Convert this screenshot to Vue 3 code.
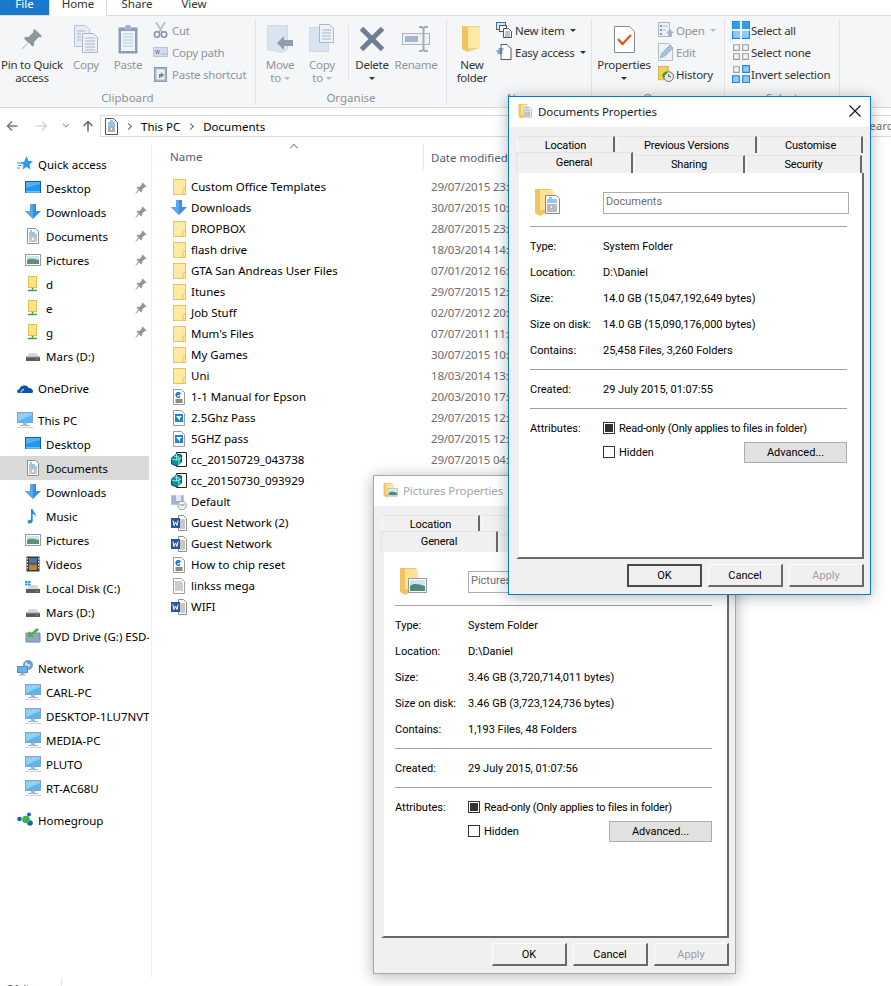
<script setup>
const quickAccess = [
  { icon: 'desktop', label: 'Desktop' },
  { icon: 'down', label: 'Downloads' },
  { icon: 'doc', label: 'Documents' },
  { icon: 'picture', label: 'Pictures' },
  { icon: 'share', label: 'd' },
  { icon: 'share', label: 'e' },
  { icon: 'share', label: 'g' }
]

const thisPc = [
  { icon: 'desktop', label: 'Desktop' },
  { icon: 'doc', label: 'Documents', selected: true },
  { icon: 'down', label: 'Downloads' },
  { icon: 'music', label: 'Music' },
  { icon: 'picture', label: 'Pictures' },
  { icon: 'film', label: 'Videos' },
  { icon: 'sysdisk', label: 'Local Disk (C:)' },
  { icon: 'drive', label: 'Mars (D:)' },
  { icon: 'dvd', label: 'DVD Drive (G:) ESD-' }
]

const network = ['CARL-PC', 'DESKTOP-1LU7NVT', 'MEDIA-PC', 'PLUTO', 'RT-AC68U']

const files = [
  { icon: 'folder', name: 'Custom Office Templates', date: '29/07/2015 23:45' },
  { icon: 'down', name: 'Downloads', date: '30/07/2015 10:02' },
  { icon: 'folder', name: 'DROPBOX', date: '28/07/2015 23:58' },
  { icon: 'folder', name: 'flash drive', date: '18/03/2014 14:10' },
  { icon: 'folder', name: 'GTA San Andreas User Files', date: '07/01/2012 16:21' },
  { icon: 'folder', name: 'Itunes', date: '29/07/2015 12:30' },
  { icon: 'folder', name: 'Job Stuff', date: '02/07/2012 20:14' },
  { icon: 'folder', name: "Mum's Files", date: '07/07/2011 11:05' },
  { icon: 'folder', name: 'My Games', date: '30/07/2015 10:09' },
  { icon: 'folder', name: 'Uni', date: '18/03/2014 13:40' },
  { icon: 'pdf', name: '1-1 Manual for Epson', date: '20/03/2010 17:12' },
  { icon: 'pass', name: '2.5Ghz Pass', date: '29/07/2015 12:31' },
  { icon: 'pass', name: '5GHZ pass', date: '29/07/2015 12:31' },
  { icon: 'cube', name: 'cc_20150729_043738', date: '29/07/2015 04:37' },
  { icon: 'cube', name: 'cc_20150730_093929' },
  { icon: 'rdp', name: 'Default' },
  { icon: 'word', name: 'Guest Network (2)' },
  { icon: 'word', name: 'Guest Network' },
  { icon: 'pdf', name: 'How to chip reset' },
  { icon: 'txt', name: 'linkss mega' },
  { icon: 'word', name: 'WIFI' }
]

const windows = [
  {
    id: 'pictures',
    title: 'Pictures Properties',
    name: 'Pictures',
    icon: 'foldpic',
    left: 373,
    top: 475,
    active: false,
    rows: [
      ['Type:', 'System Folder'],
      ['Location:', 'D:\\Daniel'],
      ['Size:', '3.46 GB (3,720,714,011 bytes)'],
      ['Size on disk:', '3.46 GB (3,723,124,736 bytes)'],
      ['Contains:', '1,193 Files, 48 Folders']
    ],
    created: '29 July 2015, 01:07:56'
  },
  {
    id: 'documents',
    title: 'Documents Properties',
    name: 'Documents',
    icon: 'folddoc',
    left: 508,
    top: 96,
    active: true,
    rows: [
      ['Type:', 'System Folder'],
      ['Location:', 'D:\\Daniel'],
      ['Size:', '14.0 GB (15,047,192,649 bytes)'],
      ['Size on disk:', '14.0 GB (15,090,176,000 bytes)'],
      ['Contains:', '25,458 Files, 3,260 Folders']
    ],
    created: '29 July 2015, 01:07:55'
  }
]

const tabsTop = [
  { label: 'Location', width: 98 },
  { label: 'Previous Versions', width: 140 },
  { label: 'Customise', width: 104 }
]

const tabsBottom = [
  { label: 'Sharing', width: 111 },
  { label: 'Security', width: 116 }
]
</script>

<template>
  <div class="page">
    <svg class="sprite" aria-hidden="true">
      <symbol id="folder" viewBox="0 0 16 16">
        <rect x="2.5" y="0.5" width="12" height="15" fill="#ffe9a3" stroke="#e9c64f" />
        <path d="M12 15.5V10.5l2.5-1.5" fill="none" stroke="#e9c64f" />
      </symbol>
      <symbol id="down" viewBox="0 0 16 16">
        <path d="M5 0h6v7h5l-8 8-8-8h5z" fill="#3d8fdc" />
        <path d="M8 15l-8-8h5V0h3z" fill="#5aa7ec" />
      </symbol>
      <symbol id="desktop" viewBox="0 0 16 16">
        <rect x="0.5" y="1.5" width="15" height="11" fill="#1f97f0" stroke="#10619f" />
        <path d="M1 12h14" stroke="#cfe6f8" />
        <path d="M1 2h14v2L1 8z" fill="#4db2f7" />
      </symbol>
      <symbol id="doc" viewBox="0 0 16 16">
        <path d="M2.5 .5h8l3 3v12h-11z" fill="#fff" stroke="#8f8f8f" />
        <path d="M5 3h2M4 5h6M4 7h8" stroke="#2a8fdc" />
        <path d="M4 9h8M4 11h3M9 11h3M4 13h8" stroke="#8c8c8c" />
      </symbol>
      <symbol id="picture" viewBox="0 0 16 16">
        <rect x="0.5" y="2.5" width="15" height="11" fill="#fff" stroke="#9c9c9c" />
        <rect x="2" y="4" width="12" height="8" fill="#cfe3f2" />
        <path d="M2 8c3-2 6-1 12 0v4H2z" fill="#5f8f74" />
      </symbol>
      <symbol id="share" viewBox="0 0 16 16">
        <rect x="3.5" y="0.5" width="8" height="11" fill="#ffe38a" stroke="#e3c04c" />
        <path d="M7.5 12v2M3 14.500h9" stroke="#3aa63a" stroke-width="1.400" />
      </symbol>
      <symbol id="drive" viewBox="0 0 16 16">
        <path d="M2 9l2-4h8l2 4z" fill="#d8d8d8" />
        <rect x="1" y="9" width="14" height="4" fill="#5a5a5a" />
        <path d="M1 9h14" stroke="#9a9a9a" />
        <rect x="11" y="10.500" width="1.500" height="1" fill="#5fe05f" />
      </symbol>
      <symbol id="sysdisk" viewBox="0 0 16 16">
        <path d="M2 9l2-4h8l2 4z" fill="#d8d8d8" />
        <rect x="1" y="9" width="14" height="4" fill="#5a5a5a" />
        <rect x="11" y="10.500" width="1.500" height="1" fill="#5fe05f" />
        <path d="M0 1h2.500v2H0zM3 1h2.500v2H3zM0 3.500h2.500v2H0zM3 3.500h2.500v2H3z" fill="#16a5f0" />
      </symbol>
      <symbol id="music" viewBox="0 0 16 16">
        <path d="M6 1h1.500c.5 3 4 4 3.500 8-.6-1.800-2-3-3.300-3.300V13c0 1.700-1.800 2.500-3.300 2.500S2 14.500 2.800 13c.6-1.100 2-1.600 3.200-1.200z" fill="#1c8fe6" />
      </symbol>
      <symbol id="film" viewBox="0 0 16 16">
        <rect x="1.500" y="0.500" width="13" height="15" fill="#3a3a3a" />
        <rect x="4" y="2" width="8" height="5.500" fill="#3a76b8" />
        <rect x="4" y="8.500" width="8" height="5.500" fill="#b68a2e" />
        <path d="M6 4l3 2M7 10h3" stroke="#d95a2b" />
        <path d="M2.500 2v12M13.500 2v12" stroke="#e8e8e8" stroke-dasharray="1.500 1.500" />
      </symbol>
      <symbol id="dvd" viewBox="0 0 16 16">
        <path d="M1 5h14v9H1z" fill="#8da9c4" stroke="#6d88a3" />
        <path d="M12 0L6 5 4 3 3 9l6 0-2-2 7-5z" fill="#43b643" />
      </symbol>
      <symbol id="star" viewBox="0 0 16 16">
        <path d="M9.500 0l1.800 4.800L16 5.300l-3.500 3.200 1 5-4-2.500-4 2.800 1-5L3 6h4z" fill="#2b9af0" />
        <path d="M0 7h5M1 9.500h3M0 12h3" stroke="#2b9af0" />
      </symbol>
      <symbol id="cloud" viewBox="0 0 16 16">
        <path d="M1 13c-1.500-1-1-3.500 1.200-3.700C3 6.500 5.500 5 8 5.500c2 0 3 1.200 3.500 2.500 2.500-.3 4.500 1.400 4.500 3.300 0 1-.5 1.700-1 1.700z" fill="#0f55a8" />
        <path d="M4 12.500c0-2 1.500-3 3-2.800" stroke="#fff" fill="none" />
      </symbol>
      <symbol id="pc" viewBox="0 0 16 16">
        <rect x="0.500" y="0.500" width="15" height="10" fill="#58b7f8" stroke="#8aa3b8" />
        <path d="M1 1h14v2L1 9z" fill="#8ed0fb" />
        <path d="M6.500 11h3v2h-3zM3 13.500h10" fill="#b5c2cd" stroke="#a5b3c0" />
        <path d="M0 15.500h16" stroke="#c8d2da" />
      </symbol>
      <symbol id="globe" viewBox="0 0 16 16">
        <circle cx="11" cy="5" r="5" fill="#6b9dcb" />
        <path d="M8 2c2 0 2 2 4 2s2 2 0 3-2 2-4 0z" fill="#c6dcef" />
        <rect x="0.500" y="6.500" width="10" height="6" fill="#5fb3f0" stroke="#6a8aa5" />
        <path d="M4 13h3v1.500H4zM2 15h7" fill="#a0b0bd" stroke="#a0b0bd" />
      </symbol>
      <symbol id="homegroup" viewBox="0 0 16 16">
        <circle cx="2.500" cy="7" r="2.300" fill="#1565b5" />
        <circle cx="12" cy="2.500" r="2" fill="#1565b5" />
        <circle cx="13" cy="11" r="2.800" fill="#1565b5" />
        <circle cx="9" cy="7.500" r="3.800" fill="#3eb24b" />
      </symbol>
      <symbol id="pinsmall" viewBox="0 0 12 12">
        <path d="M7.500 .5l4 4-1 .7-.8-.2-2.500 2.400v2l-1 1-2-2L1 11.500H.5V11l3.100-3.200-2-2 1-1h2L7 2.400l-.2-.9z" fill="#8f979d" />
      </symbol>
      <symbol id="pdf" viewBox="0 0 16 16">
        <path d="M2.500 .5h8l3 3v12h-11z" fill="#fff" stroke="#9a9a9a" />
        <path d="M5 5.500h4M9.500 5a2.300 2.300 0 1 0-.5 2.500" fill="none" stroke="#1c6cc0" stroke-width="1.300" />
        <path d="M4 10h8v4H4z" fill="#c4c4c4" />
        <path d="M5 13h6M5 11h6" stroke="#555" />
      </symbol>
      <symbol id="pass" viewBox="0 0 16 16">
        <path d="M2.500 .5h8l3 3v12h-11z" fill="#fff" stroke="#9a9a9a" />
        <rect x="4" y="4" width="8" height="8" fill="#1c84d8" />
        <path d="M5 6h6l-2 2-.5 3-1-2z" fill="#fff" />
      </symbol>
      <symbol id="cube" viewBox="0 0 16 16">
        <path d="M5.500 .5h10v14h-10z" fill="#fff" stroke="#222" />
        <path d="M.5 6l5-4 5 1v7l-5 4-5-2z" fill="#0f8f9a" stroke="#0b4b55" />
        <path d="M5.500 2v6M.5 7l5 1 5-2M3 4l5 1v8" fill="none" stroke="#8fe8ec" />
      </symbol>
      <symbol id="rdp" viewBox="0 0 16 16">
        <rect x="0.500" y="1.500" width="12" height="9" fill="#a6b0dd" stroke="#c4c4c4" />
        <path d="M5 1h5v6H5z" fill="#e3e6f5" />
        <circle cx="11" cy="11.500" r="4.200" fill="#f2f2f2" stroke="#9a9a9a" />
        <path d="M8.500 11h1.500M12 11h1.500M11 10v2" stroke="#4cae4c" />
      </symbol>
      <symbol id="word" viewBox="0 0 16 16">
        <path d="M7.500 .5h5l3 3v12h-8z" fill="#fff" stroke="#8f8f8f" />
        <path d="M9 5h5M9 7h5M9 9h5M9 11h5M9 13h5" stroke="#8f8f8f" />
        <rect x="0" y="3" width="9" height="10" fill="#2b579a" />
        <path d="M2 5.500l1 5 1.500-3.500L6 10.500l1-5" fill="none" stroke="#fff" />
      </symbol>
      <symbol id="txt" viewBox="0 0 16 16">
        <path d="M2.500 .5h8l3 3v12h-11z" fill="#fff" stroke="#a0a0a0" />
        <path d="M4 4h7M4 6h8M4 8h8M4 10h8M4 12h8" stroke="#9a9a9a" />
      </symbol>

      <symbol id="r-pin" viewBox="0 0 22 22">
        <path d="M13.500 1l7.500 7-1.500 1.500L18 9l-5 5 .3 3-1.800 1.500-4-4L1.500 21 1 20.500 7 14.500l-4-4L4.500 8.700l3 .3 5-5-.4-1.500z" fill="#8e979e" />
      </symbol>
      <symbol id="r-copy" viewBox="0 0 24 28">
        <path d="M.5 .5h11l4 4v17H.5z" fill="#e6ecf5" stroke="#b7c3d4" />
        <path d="M8.500 8.500h11l4 4v15h-15z" fill="#eef2f8" stroke="#aab7c9" />
        <path d="M3 6h8M3 9h4M3 12h4M3 15h4M11 13h10M11 16h10M11 19h10M11 22h10M11 25h10" stroke="#a9b6c8" />
      </symbol>
      <symbol id="r-paste" viewBox="0 0 20 29">
        <rect x="0.500" y="2.500" width="19" height="26" rx="1" fill="#8d9db6" />
        <rect x="3" y="6" width="14" height="20" fill="#edf2f9" />
        <path d="M5 9h10M5 12h10M5 15h10M5 18h10M5 21h10" stroke="#b8c6da" />
        <path d="M7 3l1-3h4l1 3 1 2H6z" fill="#a5b3c9" />
      </symbol>
      <symbol id="r-cut" viewBox="0 0 15 16">
        <path d="M3 0l6 10M12 0L6 10" stroke="#b2bbc7" stroke-width="1.500" />
        <circle cx="4" cy="12.500" r="2.700" fill="none" stroke="#7f93ad" stroke-width="1.500" />
        <circle cx="11" cy="12.500" r="2.700" fill="none" stroke="#7f93ad" stroke-width="1.500" />
      </symbol>
      <symbol id="r-path" viewBox="0 0 15 10">
        <rect x="0.500" y="0.500" width="14" height="9" fill="#d4dceb" stroke="#b9c4d6" />
        <path d="M2.500 3l1 4 1-4 1 4 1-4M8.500 7h1M10.500 7h1M12.500 7h1" fill="none" stroke="#6f7f95" stroke-width=".8" />
      </symbol>
      <symbol id="r-shortcut" viewBox="0 0 13 16">
        <rect x="0.500" y="1.500" width="12" height="14" fill="#a7b6cb" stroke="#8a9ab2" />
        <rect x="2.500" y="3.500" width="8" height="10" fill="#edf2f9" />
        <path d="M5 12V8h2V6l3 3-3 3v-2H6.500v2z" fill="#6e829e" />
      </symbol>
      <symbol id="r-move" viewBox="0 0 27 28">
        <path d="M.5 .5h20v24l-6 3-14-3z" fill="#dae3f0" stroke="#cfd9e8" />
        <path d="M10 18l7-7v4h9v6h-9v4z" fill="#8d9db3" />
      </symbol>
      <symbol id="r-copyto" viewBox="0 0 26 30">
        <path d="M.5 3.500h19v24H.5z" fill="#dae3f0" stroke="#cfd9e8" />
        <path d="M10.500 .5h10l4 4v14h-14z" fill="#eef2f8" stroke="#a9b6c8" />
        <path d="M13 6h9M13 9h9M13 12h9M13 15h9" stroke="#a9b6c8" />
      </symbol>
      <symbol id="r-delete" viewBox="0 0 26 26">
        <path d="M2.500 2.500l21 21M23.500 2.500l-21 21" stroke="#6e7e94" stroke-width="5" />
      </symbol>
      <symbol id="r-rename" viewBox="0 0 28 26">
        <rect x="0.500" y="7.500" width="27" height="11" fill="#eef2f8" stroke="#a9b6c8" />
        <rect x="3" y="10" width="13" height="6" fill="#a7b6cb" />
        <path d="M17 1h3l1.500 1.500L23 1h3M21.500 2.500v21M17 25h3l1.500-1.500L23 25h3" fill="none" stroke="#9fadc0" stroke-width="2" />
      </symbol>
      <symbol id="r-newfolder" viewBox="0 0 22 28">
        <path d="M1 1h18v22L7 27 1 24z" fill="#f3d27b" />
        <path d="M7 2h12v21H7z" fill="#ffe9a3" />
        <path d="M1 1l6 1v25L1 24z" fill="#f0c560" />
      </symbol>
      <symbol id="r-newitem" viewBox="0 0 16 16">
        <rect x="0.500" y="0.500" width="9" height="7" fill="#d6e9f8" stroke="#3c6e97" />
        <rect x="3.500" y="3.500" width="7" height="6" fill="#fff" stroke="#555" />
        <path d="M7.500 6.500h5l3 3v6h-8z" fill="#fff" stroke="#555" />
        <path d="M9 10h5M9 12h5M9 14h5" stroke="#6c8fb0" />
      </symbol>
      <symbol id="r-easy" viewBox="0 0 15 16">
        <path d="M4.500 .5h6l4 4v11h-10z" fill="#fff" stroke="#555" />
        <path d="M2 5h5M0 7h6M1 9h5" stroke="#1c5fb0" />
      </symbol>
      <symbol id="r-props" viewBox="0 0 21 27">
        <path d="M.5 .5h15l5 5v21H.5z" fill="#fff" stroke="#8a8a8a" />
        <path d="M4 13l4.500 5L17 9" fill="none" stroke="#e8561c" stroke-width="2.400" />
      </symbol>
      <symbol id="r-open" viewBox="0 0 16 16">
        <rect x="0.500" y="0.500" width="11" height="14" fill="#eef2f8" stroke="#a9b6c8" />
        <path d="M2 3h2v2H2zM2 7h2v2H2zM2 11h2v2H2z" fill="#7f93ad" />
        <path d="M5 4h5M5 8h3" stroke="#a9b6c8" />
        <path d="M12 7l4 4h-2v4h-4v-4H8z" fill="#a7b6cb" />
      </symbol>
      <symbol id="r-edit" viewBox="0 0 16 18">
        <path d="M.5 .5h10l4 4v13H.5z" fill="#eef2f8" stroke="#b2bfd0" />
        <path d="M2 15l2-5 8-8 3 3-8 8z" fill="#a7c2df" stroke="#8fa9c5" stroke-width=".7" />
      </symbol>
      <symbol id="r-history" viewBox="0 0 18 18">
        <rect x="0.500" y="0.500" width="11" height="15" fill="#f3cf5e" stroke="#d8ae35" />
        <circle cx="12" cy="12" r="5.500" fill="#e6e6e6" stroke="#666" />
        <path d="M12 9v3h2.500" fill="none" stroke="#444" />
        <path d="M9 6L5 9v2l1 3 2-2-1-1 4-3z" fill="#29a33a" />
      </symbol>
      <symbol id="r-all" viewBox="0 0 16 16">
        <rect x="0.500" y="0.500" width="15" height="15" fill="#92c8f3" stroke="#1f86d8" />
        <path d="M8 0v16M0 8h16" stroke="#fff" stroke-width="1.500" />
        <path d="M1 1h6v6H1zM9 1h6v6H9z" fill="#2f9be8" />
      </symbol>
      <symbol id="r-none" viewBox="0 0 16 16">
        <path d="M1.500 1.500h5v5h-5zM9.500 1.500h5v5h-5zM1.500 9.500h5v5h-5zM9.500 9.500h5v5h-5z" fill="none" stroke="#9c9c9c" />
      </symbol>
      <symbol id="r-invert" viewBox="0 0 16 16">
        <path d="M1.500 1.500h5v5h-5z" fill="none" stroke="#9c9c9c" />
        <path d="M9.500 .5h6v6h-6z" fill="#92c8f3" stroke="#1f86d8" />
        <path d="M.5 9.500h6v6h-6zM9.500 9.500h6v6h-6z" fill="#92c8f3" stroke="#1f86d8" />
      </symbol>
      <symbol id="nav-arrow" viewBox="0 0 12 12">
        <path d="M11.500 6H1.500M6 1.500L1.500 6 6 10.500" fill="none" stroke="currentColor" stroke-width="1.500" />
      </symbol>
      <symbol id="addr-doc" viewBox="0 0 13 17">
        <path d="M.5 .5h8l4 4v12H.5z" fill="#fff" stroke="#555" />
        <path d="M5 3h3M3 5h7M3 7h7" stroke="#1c8fe0" />
        <path d="M3 9h7M3 11h3M7 11h3M3 13h7" stroke="#666" />
      </symbol>
      <symbol id="foldpic" viewBox="0 0 30 30">
        <path d="M1 2h16v21L6 29 1 26z" fill="#f0c560" />
        <path d="M6 3h13v20H6z" fill="#ffe295" />
        <rect x="9.500" y="12.500" width="18" height="14" fill="#fff" stroke="#9a9a9a" />
        <rect x="11" y="14" width="15" height="11" fill="#cfe3f2" />
        <path d="M11 20c4-3 8-2 15 0v5H11z" fill="#4f8a78" />
      </symbol>
      <symbol id="folddoc" viewBox="0 0 30 30">
        <path d="M1 2h16v21L6 29 1 26z" fill="#f0c560" />
        <path d="M6 3h13v20H6z" fill="#ffe295" />
        <path d="M11.500 8.500h11l3 3v15h-14z" fill="#fff" stroke="#8a8a8a" />
        <path d="M15 11h3M13 13h10M13 15h10" stroke="#2a8fdc" />
        <path d="M13 18h10M13 20h4M18 20h5M13 22h10M13 24h10" stroke="#777" />
      </symbol>
    </svg>

    <div class="menu-tabs">
      <span class="menu-tab file">File</span>
      <span class="menu-tab home">Home</span>
      <span class="menu-tab share-tab">Share</span>
      <span class="menu-tab view">View</span>
    </div>

    <div class="ribbon">
      <section class="group clipboard">
        <div class="group-body">
          <div class="big pin"><span class="big-icon"><svg width="22" height="22"><use href="#r-pin" /></svg></span><span>Pin to Quick<br />access</span></div>
          <div class="big copy off"><span class="big-icon"><svg width="24" height="28"><use href="#r-copy" /></svg></span><span>Copy</span></div>
          <div class="big paste off"><span class="big-icon"><svg width="20" height="29"><use href="#r-paste" /></svg></span><span>Paste</span></div>
          <div class="small-col">
            <div class="small off"><svg width="15" height="16"><use href="#r-cut" /></svg>Cut</div>
            <div class="small off"><svg width="15" height="10"><use href="#r-path" /></svg>Copy path</div>
            <div class="small off"><svg width="15" height="16"><use href="#r-shortcut" /></svg>Paste shortcut</div>
          </div>
        </div>
        <div class="group-label">Clipboard</div>
      </section>

      <section class="group organise">
        <div class="group-body">
          <div class="big move off"><span class="big-icon"><svg width="27" height="28"><use href="#r-move" /></svg></span><span>Move<br />to <i class="caret light"></i></span></div>
          <div class="big copy-to off"><span class="big-icon"><svg width="26" height="30"><use href="#r-copyto" /></svg></span><span>Copy<br />to <i class="caret light"></i></span></div>
          <div class="vsep"></div>
          <div class="big delete"><span class="big-icon"><svg width="26" height="26"><use href="#r-delete" /></svg></span><span>Delete<br /><i class="caret"></i></span></div>
          <div class="big rename off"><span class="big-icon"><svg width="28" height="26"><use href="#r-rename" /></svg></span><span>Rename</span></div>
        </div>
        <div class="group-label">Organise</div>
      </section>

      <section class="group new">
        <div class="group-body">
          <div class="big new-folder"><span class="big-icon"><svg width="22" height="28"><use href="#r-newfolder" /></svg></span><span>New<br />folder</span></div>
          <div class="small-col">
            <div class="small"><svg width="16" height="16"><use href="#r-newitem" /></svg>New item <i class="caret"></i></div>
            <div class="small"><svg width="16" height="16"><use href="#r-easy" /></svg>Easy access <i class="caret"></i></div>
          </div>
        </div>
        <div class="group-label">New</div>
      </section>

      <section class="group open">
        <div class="group-body">
          <div class="big properties"><span class="big-icon"><svg width="21" height="27"><use href="#r-props" /></svg></span><span>Properties<br /><i class="caret"></i></span></div>
          <div class="small-col">
            <div class="small off"><svg width="16" height="16"><use href="#r-open" /></svg>Open <i class="caret light"></i></div>
            <div class="small off"><svg width="16" height="18"><use href="#r-edit" /></svg>Edit</div>
            <div class="small"><svg width="16" height="16"><use href="#r-history" /></svg>History</div>
          </div>
        </div>
        <div class="group-label">Open</div>
      </section>

      <section class="group select">
        <div class="group-body">
          <div class="small-col">
            <div class="small"><svg width="18" height="18"><use href="#r-all" /></svg>Select all</div>
            <div class="small"><svg width="18" height="18"><use href="#r-none" /></svg>Select none</div>
            <div class="small"><svg width="18" height="18"><use href="#r-invert" /></svg>Invert selection</div>
          </div>
        </div>
        <div class="group-label">Select</div>
      </section>
    </div>

    <div class="address-row">
      <svg class="nav back" width="12" height="12"><use href="#nav-arrow" /></svg>
      <svg class="nav forward" width="12" height="12"><use href="#nav-arrow" /></svg>
      <span class="nav-drop"></span>
      <svg class="nav up" width="12" height="12"><use href="#nav-arrow" /></svg>
      <div class="address">
        <svg width="13" height="17"><use href="#addr-doc" /></svg>
        <span class="crumb-sep"></span>
        <span>This PC</span>
        <span class="crumb-sep"></span>
        <span>Documents</span>
      </div>
      <div class="search">Search Documents</div>
    </div>

    <div class="main">
      <nav class="sidebar">
        <div class="nav-item head"><svg width="16" height="16"><use href="#star" /></svg>Quick access</div>
        <div v-for="item in quickAccess" :key="item.label" class="nav-item">
          <svg width="16" height="16"><use :href="'#' + item.icon" /></svg>{{ item.label }}
          <svg class="pin-mark" width="12" height="12"><use href="#pinsmall" /></svg>
        </div>
        <div class="nav-item"><svg width="16" height="16"><use href="#drive" /></svg>Mars (D:)</div>

        <div class="nav-item head gap"><svg width="16" height="16"><use href="#cloud" /></svg>OneDrive</div>

        <div class="nav-item head gap"><svg width="16" height="16"><use href="#pc" /></svg>This PC</div>
        <div
          v-for="item in thisPc"
          :key="item.label"
          class="nav-item"
          :class="{ selected: item.selected }"
        >
          <svg width="16" height="16"><use :href="'#' + item.icon" /></svg>{{ item.label }}
        </div>

        <div class="nav-item head gap"><svg width="16" height="16"><use href="#globe" /></svg>Network</div>
        <div v-for="host in network" :key="host" class="nav-item">
          <svg width="16" height="16"><use href="#pc" /></svg>{{ host }}
        </div>

        <div class="nav-item head gap"><svg width="16" height="16"><use href="#homegroup" /></svg>Homegroup</div>
      </nav>

      <div class="list">
        <div class="list-head">
          <div class="col-name">Name<span class="sort-caret"></span></div>
          <div class="col-date">Date modified</div>
        </div>
        <div class="rows">
          <div v-for="file in files" :key="file.name" class="row">
            <svg width="16" height="16"><use :href="'#' + file.icon" /></svg>
            <span class="row-name">{{ file.name }}</span>
            <span class="row-date">{{ file.date }}</span>
          </div>
        </div>
      </div>
    </div>

    <div class="status"><span>21 items</span></div>

    <div
      v-for="win in windows"
      :key="win.id"
      class="win"
      :class="{ active: win.active }"
      :style="{ left: win.left + 'px', top: win.top + 'px' }"
    >
      <div class="win-title">
        <svg width="16" height="16"><use :href="'#' + win.icon" /></svg>
        <span class="win-name">{{ win.title }}</span>
        <svg class="win-close" width="12" height="12" viewBox="0 0 12 12">
          <path d="M.5 .5l11 11M11.500 .5l-11 11" stroke="#111" stroke-width="1.100" fill="none" />
        </svg>
      </div>
      <div class="win-body">
        <div class="tab-row top">
          <div v-for="tab in tabsTop" :key="tab.label" class="tab" :style="{ width: tab.width + 'px' }">{{ tab.label }}</div>
        </div>
        <div class="tab-row bottom">
          <div class="tab current">General</div>
          <div v-for="tab in tabsBottom" :key="tab.label" class="tab" :style="{ width: tab.width + 'px' }">{{ tab.label }}</div>
        </div>
        <div class="panel">
          <div class="panel-head">
            <svg width="30" height="30"><use :href="'#' + win.icon" /></svg>
            <div class="name-input">{{ win.name }}</div>
          </div>
          <div class="rule"></div>
          <div class="info">
            <div v-for="row in win.rows" :key="row[0]" class="info-row">
              <span>{{ row[0] }}</span><span>{{ row[1] }}</span>
            </div>
          </div>
          <div class="rule"></div>
          <div class="info">
            <div class="info-row"><span>Created:</span><span>{{ win.created }}</span></div>
          </div>
          <div class="rule"></div>
          <div class="info">
            <div class="info-row">
              <span>Attributes:</span>
              <span class="check-line narrow"><i class="check on"></i>Read-only (Only applies to files in folder)</span>
            </div>
            <div class="info-row hidden-row">
              <span></span>
              <span class="check-line"><i class="check"></i>Hidden<button type="button" class="advanced">Advanced...</button></span>
            </div>
          </div>
        </div>
        <div class="win-foot">
          <button type="button" class="win-btn primary">OK</button>
          <button type="button" class="win-btn">Cancel</button>
          <button type="button" class="win-btn" disabled>Apply</button>
        </div>
      </div>
    </div>
  </div>
</template>

<style scoped>
.page {
  position: relative;
  width: 891px;
  height: 986px;
  overflow: hidden;
  background: #fff;
  color: #000;
  font-family: "Noto Sans", "Open Sans", sans-serif;
  font-size: 11.5px;
}

.sprite {
  position: absolute;
  width: 0;
  height: 0;
}

svg {
  flex: none;
  display: block;
}

.menu-tabs {
  display: flex;
  height: 15px;
  line-height: 8px;
}

.menu-tab {
  text-align: center;
}

.file {
  width: 49px;
  background: #1979ca;
  color: #fff;
}

.home {
  width: 58px;
  height: 16px;
  position: relative;
  z-index: 1;
  background: #fff;
  border-inline: 1px solid #dadbdc;
  box-sizing: border-box;
  color: #333;
}

.share-tab {
  width: 58px;
  margin-left: 1px;
  color: #333;
}

.view {
  width: 56px;
  color: #333;
}

.ribbon {
  display: flex;
  box-sizing: border-box;
  height: 93px;
  background: #f5f6f7;
  border-top: 1px solid #dadbdc;
  border-bottom: 1px solid #dadbdc;
  color: #333;
  letter-spacing: -.25px;
}

.group {
  box-sizing: border-box;
  height: 86px;
  margin-top: 3px;
  display: flex;
  flex-direction: column;
  border-right: 1px solid #e1e3e6;
}

.clipboard {
  width: 256px;
}

.organise {
  width: 191px;
}

.new {
  width: 145px;
}

.open {
  width: 133px;
}

.select {
  width: 115px;
}

.group-body {
  display: flex;
  height: 72px;
  padding-top: 1px;
  box-sizing: border-box;
}

.group-label {
  text-align: center;
  line-height: 14px;
  color: #8d9299;
  font-size: 11.5px;
  letter-spacing: 0;
}

.big {
  display: flex;
  flex-direction: column;
  align-items: center;
  text-align: center;
  line-height: 13px;
  white-space: nowrap;
}

.big-icon {
  display: flex;
  align-items: center;
  justify-content: center;
  height: 38px;
}

.off {
  color: #8f959c;
}

.pin {
  width: 64px;
}

.copy {
  width: 44px;
}

.paste {
  width: 40px;
}

.clipboard .small-col {
  margin-left: 5px;
}

.move {
  width: 40px;
  margin-left: 4px;
}

.copy-to {
  width: 40px;
  margin-left: 2px;
}

.vsep {
  width: 1px;
  height: 55px;
  margin: 5px 3px 0 6px;
  background: #e1e3e6;
}

.delete {
  width: 40px;
}

.rename {
  width: 44px;
  margin-left: 2px;
}

.new-folder {
  width: 40px;
  margin-left: 5px;
}

.new .small-col {
  margin-left: 4px;
}

.new .small {
  gap: 3px;
}

.properties {
  width: 48px;
  margin-left: 8px;
}

.open .small-col {
  margin-left: 10px;
}

.open .small {
  gap: 2px;
}

.select .small-col {
  margin-left: 7px;
}

.select .small {
  gap: 1px;
}

.small-col {
  display: flex;
  flex-direction: column;
  margin-top: -1px;
}

.small {
  display: flex;
  align-items: center;
  gap: 4px;
  height: 22px;
  white-space: nowrap;
}

.caret {
  display: inline-block;
  border-top: 3px solid #333;
  border-inline: 3px solid transparent;
  vertical-align: middle;
}

.small .caret {
  margin-left: 3px;
}

.caret.light {
  border-top-color: #b5bac0;
}

.address-row {
  display: flex;
  align-items: flex-start;
  height: 36px;
  box-sizing: border-box;
  padding-top: 7px;
  overflow: hidden;
}

.nav {
  margin-top: 5px;
}

.back {
  margin-left: 6px;
  color: #777;
}

.forward {
  margin-left: 18px;
  transform: scaleX(-1);
  color: #d4d4d4;
}

.nav-drop {
  flex: none;
  width: 5px;
  height: 5px;
  margin: 6px 0 0 15px;
  border-right: 1px solid #8a8a8a;
  border-bottom: 1px solid #8a8a8a;
  transform: scale(.8) rotate(45deg);
}

.up {
  margin-left: 13px;
  transform: rotate(90deg);
  color: #666;
}

.address {
  display: flex;
  flex: none;
  align-items: center;
  box-sizing: border-box;
  width: 750px;
  height: 22px;
  margin-left: 6px;
  padding-left: 4px;
  border: 1px solid #d9d9d9;
}

.crumb-sep {
  width: 4px;
  height: 4px;
  margin: 0 10px 0 8px;
  border-top: 1px solid #666;
  border-right: 1px solid #666;
  transform: rotate(45deg);
}

.search {
  box-sizing: border-box;
  flex: none;
  height: 22px;
  margin-left: 8px;
  padding-left: 4px;
  border: 1px solid #d9d9d9;
  border-right: 0;
  line-height: 20px;
  color: #6d6d6d;
  white-space: nowrap;
}

.main {
  display: flex;
  height: 834px;
}

.sidebar {
  box-sizing: border-box;
  width: 152px;
  padding-top: 8px;
  border-right: 1px solid #f0f0f0;
  flex: none;
}

.nav-item {
  position: relative;
  display: flex;
  align-items: center;
  gap: 5px;
  box-sizing: border-box;
  width: 149px;
  height: 24px;
  padding-left: 25px;
  white-space: nowrap;
  overflow: hidden;
}

.nav-item.head {
  padding-left: 17px;
}

.nav-item.gap {
  margin-top: 8px;
}

.nav-item.selected {
  background: #d9d9d9;
}

.pin-mark {
  position: absolute;
  left: 135px;
  top: 6px;
}

.list {
  flex: 1;
}

.list-head {
  display: flex;
  height: 26px;
  align-items: center;
  color: #4c607a;
}

.col-name {
  position: relative;
  box-sizing: border-box;
  width: 272px;
  height: 26px;
  padding-left: 18px;
  line-height: 26px;
  border-right: 1px solid #e5e5e5;
}

.sort-caret {
  position: absolute;
  left: 139px;
  top: 1px;
  width: 5px;
  height: 5px;
  border-top: 1px solid #8a8a8a;
  border-left: 1px solid #8a8a8a;
  transform: rotate(45deg);
}

.col-date {
  padding-left: 7px;
}

.rows {
  padding-top: 6px;
}

.row {
  display: flex;
  align-items: center;
  height: 21px;
  padding-left: 19px;
  white-space: nowrap;
}

.row-name {
  width: 240px;
  margin-left: 4px;
}

.row-date {
  color: #6d6d6d;
  letter-spacing: -.2px;
}

.status {
  display: flex;
  height: 22px;
  padding-left: 7px;
  line-height: 22px;
  color: #333;
}

.status span {
  width: 54px;
  border-right: 1px solid #e5e5e5;
}

.win {
  position: absolute;
  box-sizing: border-box;
  width: 363px;
  height: 499px;
  background: #f0f0f0;
  border: 1px solid #a8a8a8;
  box-shadow: 0 2px 14px rgba(0, 0, 0, .3);
  font-family: Roboto, "Noto Sans", sans-serif;
  font-size: 11px;
  color: #000;
}

.win.active {
  border-color: #0a7ad1;
}

.win-title {
  display: flex;
  align-items: center;
  gap: 4px;
  box-sizing: border-box;
  height: 30px;
  padding: 0 0 2px 9px;
  background: #fff;
  font-family: "Noto Sans", sans-serif;
  font-size: 11.5px;
  letter-spacing: -.1px;
  color: #a6a6a6;
}

.active .win-title {
  color: #222;
}

.win-close {
  margin-left: auto;
  margin-right: 9px;
  visibility: hidden;
}

.active .win-close {
  visibility: visible;
}

.win-body {
  padding: 9px 6px 0 7px;
}

.tab-row {
  display: flex;
  gap: 2px;
  letter-spacing: -.15px;
}

.tab-row.top {
  height: 17px;
  margin-left: 1px;
}

.tab-row.bottom {
  height: 20px;
  gap: 1px;
}

.tab {
  box-sizing: border-box;
  text-align: center;
  background: #f0f0f0;
  border-top: 1px solid #e3e3e3;
  border-left: 1px solid #fafafa;
  border-right: 2px solid #696969;
  line-height: 18px;
}

.bottom .tab {
  margin-top: 2px;
  line-height: 18px;
}

.bottom .tab.current {
  width: 117px;
  margin-top: -1px;
  line-height: 19px;
  border-left-color: #e3e3e3;
}

.panel {
  box-sizing: border-box;
  width: 348px;
  height: 386px;
  padding: 14px 15px 0 11px;
  background: #fff;
  border-left: 3px solid #efefef;
  border-right: 2px solid #696969;
  border-bottom: 2px solid #696969;
}

.panel-head {
  display: flex;
  align-items: center;
  height: 30px;
  padding-left: 4px;
}

.name-input {
  flex: none;
  box-sizing: border-box;
  width: 246px;
  height: 22px;
  margin: 1px 0 0 39px;
  padding-left: 2px;
  border: 1px solid #adadad;
  line-height: 18px;
  color: #6d6d6d;
}

.rule {
  height: 1px;
  background: #a0a0a0;
}

.panel-head + .rule {
  margin-top: 9px;
}

.info {
  padding-block: 6px;
}

.info-row {
  display: grid;
  grid-template-columns: 73px 1fr;
  align-items: center;
  height: 26px;
}

.hidden-row {
  height: 22px;
}

.check-line {
  display: flex;
  align-items: center;
  gap: 4px;
}

.check-line.narrow {
  letter-spacing: -.2px;
  white-space: nowrap;
}

.check {
  box-sizing: border-box;
  width: 12px;
  height: 12px;
  padding: 1px;
  border: 1px solid #333;
  background: #fff;
}

.check.on {
  background: #333 content-box;
}

.advanced {
  box-sizing: border-box;
  width: 103px;
  height: 21px;
  margin-left: auto;
  padding: 0;
  background: #e1e1e1;
  border: 1px solid #adadad;
  font: inherit;
  color: inherit;
}

.win-foot {
  display: flex;
  justify-content: flex-end;
  gap: 6px;
  width: 348px;
  margin-top: 5px;
}

.win-btn {
  box-sizing: border-box;
  width: 75px;
  height: 23px;
  padding: 0;
  background: #f0f0f0;
  border: 1px solid #fcfcfc;
  border-right: 2px solid #696969;
  border-bottom: 2px solid #696969;
  font: inherit;
  color: inherit;
}

.active .primary {
  border: 2px solid #4a4a4a;
}

.win-btn:disabled {
  color: #a0a0a0;
}
</style>
